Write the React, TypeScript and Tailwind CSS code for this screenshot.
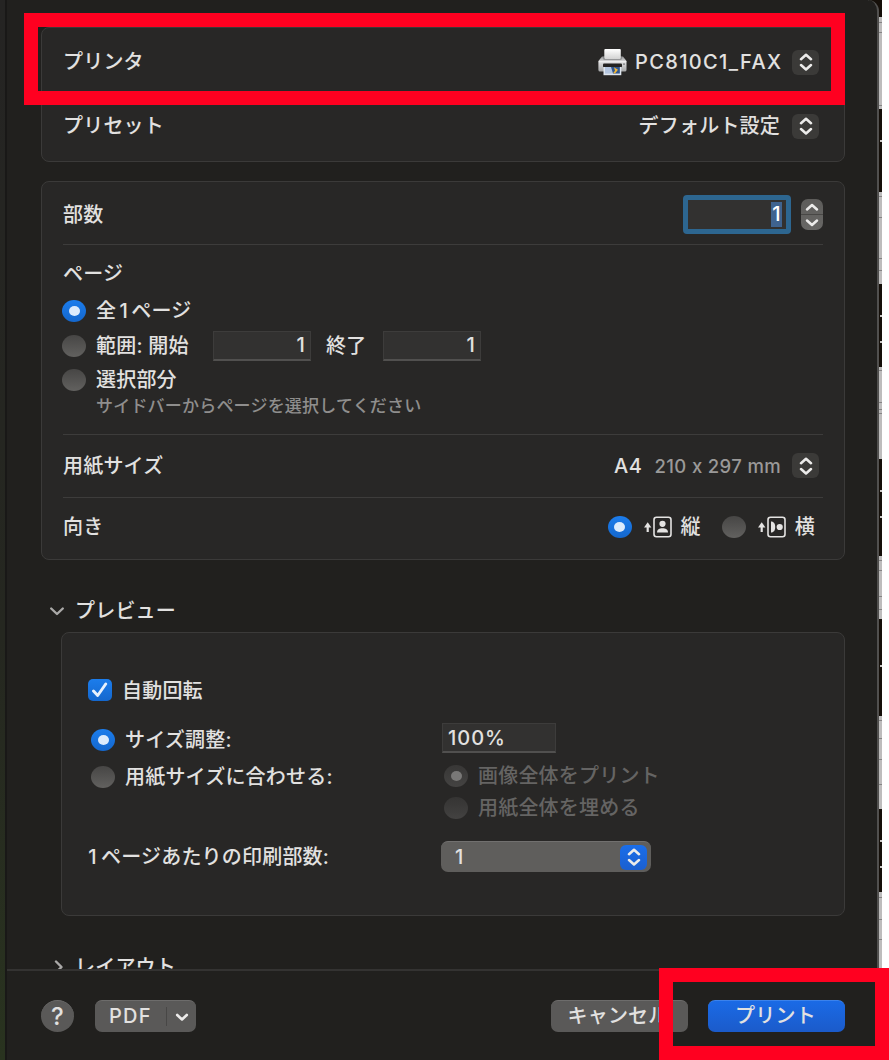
import type { ReactNode } from "react";

const bands: { h: number; light: boolean; spots: number[] }[] = [
  { h: 17, light: false, spots: [] },
  { h: 92, light: true, spots: [5, 15, 88] },
  { h: 83, light: false, spots: [31] },
  { h: 92, light: true, spots: [4, 25, 66, 78] },
  { h: 83, light: false, spots: [31, 57] },
  { h: 92, light: true, spots: [3, 35, 42, 46] },
  { h: 97, light: false, spots: [31, 57] },
  { h: 63, light: true, spots: [4, 14, 40, 53] },
  { h: 97, light: false, spots: [46] },
  { h: 93, light: true, spots: [4, 22, 43, 68] },
  { h: 83, light: false, spots: [31, 57] },
  { h: 168, light: true, spots: [5, 27, 47] },
];

function Backdrop() {
  return (
    <div className="-ml-[10px] flex w-[13px] shrink-0 flex-col">
      {bands.map((b, i) => (
        <div key={i} className={b.light ? "relative bg-[#bdbcbc]" : "relative bg-[#150f09]"} style={{ height: b.h }}>
          {b.spots.map((s) => (
            <span
              key={s}
              className={b.light ? "absolute right-0 h-px w-[3px] bg-[#858484]" : "absolute right-0 h-[2px] w-[2px] bg-[#c9c7c4]"}
              style={{ top: s }}
            />
          ))}
        </div>
      ))}
    </div>
  );
}

function Radio({ on, disabled }: { on?: boolean; disabled?: boolean }) {
  const look = on
    ? disabled
      ? "bg-linear-to-b from-[#383736] to-[#444342]"
      : "bg-linear-to-b from-[#1c7dec] to-[#1467cd]"
    : disabled
      ? "bg-linear-to-b from-[#353433] to-[#434241]"
      : "bg-linear-to-b from-[#474645] to-[#62615f]";
  return (
    <span className={`flex h-[22px] w-[24px] shrink-0 items-center justify-center rounded-[50%] ${look}`}>
      {on && <span className={`h-[10px] w-[11px] rounded-[50%] ${disabled ? "bg-[#797877]" : "bg-[#dcebfc]"}`} />}
    </span>
  );
}

function UpDown({ className = "bg-[#3b3a38]" }: { className?: string }) {
  return (
    <span className={`flex h-[25px] w-[27px] shrink-0 items-center justify-center rounded-[6px] ${className}`}>
      <svg width="14" height="18" viewBox="0 0 14 18" fill="none" stroke="#ecebea" strokeWidth="2.500" strokeLinecap="round" strokeLinejoin="round">
        <path d="M2 6.200 7 1.700l5 4.500M2 12l5 4.500L12 12" />
      </svg>
    </span>
  );
}

function Field({ className, children }: { className: string; children: ReactNode }) {
  return (
    <span className={`flex h-[30px] shrink-0 items-center border border-b-2 border-[#3d3c3b] border-b-[#51504f] bg-[#323130] ${className}`}>
      {children}
    </span>
  );
}

function Printer() {
  return (
    <svg className="shrink-0" width="29" height="28" viewBox="0 0 29 28">
      <defs>
        <linearGradient id="body" x1="0" y1="0" x2="0" y2="1">
          <stop offset="0" stopColor="#8f9092" />
          <stop offset=".35" stopColor="#e0e0e1" />
          <stop offset="1" stopColor="#a5a6a7" />
        </linearGradient>
        <linearGradient id="paper" x1="0" y1="0" x2="0" y2="1">
          <stop offset="0" stopColor="#ffffff" />
          <stop offset="1" stopColor="#d2d2d2" />
        </linearGradient>
      </defs>
      <path d="M4 8.500h21l3.500 4.500V22a1.600 1.600 0 0 1-1.600 1.500H2A1.600 1.600 0 0 1 .4 22v-9z" fill="url(#body)" />
      <path d="M5.500 8.500h18v3h-18z" fill="#6f7173" />
      <rect x="6.300" y="1" width="16.500" height="10" rx="1" fill="url(#paper)" />
      <path d="M.8 13.700h27.500" stroke="#f2f2f2" strokeWidth="1" />
      <rect x="5" y="15.500" width="19" height="3.700" rx="1" fill="#242322" />
      <rect x="25" y="15.500" width="2" height="1.200" fill="#77797b" />
      <rect x="5.500" y="19" width="17.800" height="8.200" fill="#dfe5ee" />
      <rect x="7" y="19" width="14.800" height="6.600" fill="#b4c6e0" />
      <path d="M13 19h8.800v6.600H15z" fill="#31578f" />
      <path d="M16 19.200l4 2.500-3 3.800-1.800-.6 1.800-2.200z" fill="#f3b735" />
    </svg>
  );
}

function Orientation({ landscape }: { landscape?: boolean }) {
  return (
    <svg className="shrink-0" width="28" height="22" viewBox="0 0 28 22" fill="none">
      <path d="M3.700 16V9" stroke="#e4e3e2" strokeWidth="2.200" />
      <path d="M0 11.400 3.700 6.200l3.700 5.200z" fill="#e4e3e2" />
      <rect x="10" y="1.200" width="17" height="19.600" rx="2.500" stroke="#e4e3e2" strokeWidth="1.600" />
      <g fill="#e4e3e2" transform={landscape ? "rotate(90 18.500 11)" : undefined}>
        <circle cx="18.500" cy="7.800" r="3.100" />
        <path d="M13 16.500c0-3 2.400-4.200 5.500-4.200s5.500 1.200 5.500 4.200z" />
      </g>
    </svg>
  );
}

function Chevron({ right }: { right?: boolean }) {
  return (
    <svg className="shrink-0" width="16" height="16" viewBox="0 0 16 16" fill="none" stroke="#aaa9a8" strokeWidth="2.400" strokeLinecap="round" strokeLinejoin="round">
      <path d={right ? "M6 2.500 11.500 8 6 13.500" : "M2.200 5.500 8 11l5.800-5.500"} />
    </svg>
  );
}

function One() {
  return <span className="inline-block w-[15px] text-center tracking-normal">1</span>;
}

const card = "rounded-[8px] border border-[#3b3a39] bg-[#282726]";

export default function App() {
  return (
    <div className="relative flex h-[1060px] w-[889px] overflow-hidden bg-white font-['Inter','Noto_Sans_CJK_JP',sans-serif] text-[20px] leading-[28px] font-medium tracking-[0.2px] whitespace-nowrap text-[#e2e1e0]">
      <div className="w-[5px] shrink-0 bg-linear-to-b from-[#252423] via-[#252720] via-60% to-[#29331f]" />
      <div className="relative z-10 flex w-[874px] shrink-0 flex-col overflow-hidden rounded-tr-[11px] border-r-2 border-l-2 border-r-[#51504f] border-l-[#191817] bg-[#21201e]">
        <div className="flex h-[969px] flex-col overflow-hidden pt-[27px] pr-[32px] pl-[34px]">
          <section className={`h-[135px] shrink-0 pr-[25px] pl-[21px] ${card}`}>
            <div className="flex h-[68px] items-center">
              <span>プリンタ</span>
              <span className="mr-[8px] ml-auto"><Printer /></span>
              <span className="mr-[10px] w-[147px] tracking-[1.350px]">PC810C1_FAX</span>
              <UpDown />
            </div>
            <div className="flex h-[60px] items-center justify-between">
              <span>プリセット</span>
              <span className="flex items-center gap-[12px]">デフォルト設定<UpDown /></span>
            </div>
          </section>

          <section className={`mt-[19px] h-[379px] shrink-0 px-[21px] ${card}`}>
            <div className="flex h-[63px] items-center border-b border-[#3d3c3b] pt-[2px]">
              <span className="pt-[2px]">部数</span>
              <span className="ml-auto flex h-[39px] w-[108px] items-center justify-end rounded-[4px] border-[5px] border-[#2d6690] bg-[#323130] pr-[4px]">
                <span className="flex h-[25px] w-[11px] items-center justify-center bg-[#3f638f] text-white">1</span>
              </span>
              <span className="ml-[10px] flex h-[31px] w-[22px] flex-col items-center justify-center rounded-[7px] bg-linear-to-b from-[#5d5c5a] to-[#686765]">
                <svg width="22" height="31" viewBox="0 0 22 31" fill="none" stroke="#ecebea" strokeWidth="2.500" strokeLinecap="round" strokeLinejoin="round">
                  <path d="M0 15.500h22" stroke="#484745" strokeWidth="1" />
                  <path d="M6 10.500 11 6l5 4.500M6 21.500l5 4.500 5-4.500" />
                </svg>
              </span>
            </div>
            <div className="-ml-px flex h-[189px] flex-col">
              <div className="mt-[15px] h-[28px] pl-px">ページ</div>
              <div className="mt-[6px] flex h-[34px] items-center gap-[10px]"><Radio on /><span>全<One />ページ</span></div>
              <div className="flex h-[35px] items-center">
                <Radio />
                <span className="ml-[10px] w-[117px]">範囲: 開始</span>
                <Field className="w-[98px] justify-end pr-[5px]">1</Field>
                <span className="w-[72px] pl-[15px]">終了</span>
                <Field className="w-[98px] justify-end pr-[5px]">1</Field>
              </div>
              <div className="flex h-[34px] items-center gap-[10px]"><Radio /><span>選択部分</span></div>
              <div className="-mt-[3px] pl-[34px] text-[17px] leading-[24px] text-[#8f8e8d]">サイドバーからページを選択してください</div>
            </div>
            <div className="flex h-[64px] items-center border-t border-b border-[#3d3c3b] pr-[4px] pb-px">
              <span>用紙サイズ</span>
              <span className="ml-auto tracking-[0.600px]">A4</span>
              <span className="mr-[11px] ml-[12px] text-[18.500px] tracking-[0.350px] text-[#9a9998] [font-feature-settings:'calt'_0]">210 x 297 mm</span>
              <UpDown />
            </div>
            <div className="flex h-[58px] items-center pr-[8px]">
              <span>向き</span>
              <span className="ml-auto flex items-center"><Radio on /><span className="mr-[9px] ml-[12px]"><Orientation /></span>縦</span>
              <span className="ml-[21px] flex items-center"><Radio /><span className="mr-[9px] ml-[12px]"><Orientation landscape /></span>横</span>
            </div>
          </section>

          <div className="mt-[37px] flex h-[28px] shrink-0 items-center gap-[10px] pl-[8px]"><Chevron /><span>プレビュー</span></div>
          <section className={`mt-[7px] ml-[20px] h-[284px] shrink-0 pl-[26px] ${card}`}>
            <div className="mt-[44px] flex h-[28px] items-center gap-[10px]">
              <span className="-mt-[2px] flex h-[22px] w-[24px] items-center justify-center rounded-[5px] bg-linear-to-b from-[#1c7dec] to-[#1467cd]">
                <svg width="18" height="16" viewBox="0 0 18 16" fill="none" stroke="#e7f1fd" strokeWidth="2.900" strokeLinecap="round" strokeLinejoin="round"><path d="m2.500 9 4.200 4.500 8-11.500" /></svg>
              </span>
              <span>自動回転</span>
            </div>
            <div className="mt-[16px] flex">
              <div className="w-[351px] pl-[3px]">
                <div className="flex h-[38px] items-center gap-[10px]"><Radio on /><span>サイズ調整:</span></div>
                <div className="flex h-[36px] items-center gap-[10px]"><Radio /><span>用紙サイズに合わせる:</span></div>
              </div>
              <div>
                <div className="pl-[3px]"><Field className="mt-[2px] w-[114px] pl-[5px] tracking-[1px]">100%</Field></div>
                <div className="mt-[7px] flex h-[32px] items-center gap-[10px] pl-[5px] text-[#656463]"><Radio on disabled /><span>画像全体をプリント</span></div>
                <div className="flex h-[31px] items-center gap-[10px] pl-[5px] text-[#656463]"><Radio disabled /><span>用紙全体を埋める</span></div>
              </div>
            </div>
            <div className="mt-[18px] flex h-[31px] items-center">
              <span className="w-[353px] -indent-[2px]"><One />ページあたりの印刷部数:</span>
              <span className="flex h-[31px] w-[210px] items-center justify-between rounded-[7px] border-t border-[#71706f] bg-[#5f5e5c] pr-[4px] pl-[14px]">
                <span>1</span>
                <UpDown className="bg-linear-to-b from-[#1a6eea] to-[#1b5fd0]" />
              </span>
            </div>
          </section>
          <div className="mt-[37px] flex h-[28px] shrink-0 items-center gap-[9px] pl-[9px]"><Chevron right /><span>レイアウト</span></div>
        </div>

        <footer className="flex h-[91px] items-start border-t-2 border-[#343332] pt-[29px] pr-[32px] pl-[34px]">
          <span className="flex h-[32px] w-[33px] items-center justify-center rounded-[50%] border-t border-[#6d6c6b] bg-[#5a5958] text-[24px]">?</span>
          <span className="ml-[21px] flex h-[32px] w-[101px] items-center rounded-[7px] border-t border-[#6d6c6b] bg-[#5a5958] pl-[14px]">
            <span className="w-[57px] pb-[2px] tracking-[1.200px]">PDF</span>
            <span className="h-[19px] w-px bg-[#484746]" />
            <svg className="ml-[8px]" width="14" height="12" viewBox="0 0 14 12" fill="none" stroke="#ecebea" strokeWidth="2.600" strokeLinecap="round" strokeLinejoin="round"><path d="m2.200 4 4.800 4.500L11.800 4" /></svg>
          </span>
          <span className="ml-auto flex h-[32px] w-[137px] items-center justify-center rounded-[7px] border-t border-[#6d6c6b] bg-[#5a5958] pr-[3px] pb-[2px]">キャンセル</span>
          <span className="ml-[20px] flex h-[32px] w-[137px] items-center justify-center rounded-[7px] border-t border-[#3b82ec] bg-linear-to-b from-[#1a6ae6] to-[#1b5bca] pr-[2px] pb-[2px]">プリント</span>
        </footer>
      </div>
      <Backdrop />
      <div className="absolute top-[13px] left-[24px] z-20 h-[92px] w-[821px] border-[14px] border-[#ff0020]" />
      <div className="absolute top-[968px] left-[659px] z-20 h-[92px] w-[230px] border-[14px] border-[#ff0020]" />
    </div>
  );
}
